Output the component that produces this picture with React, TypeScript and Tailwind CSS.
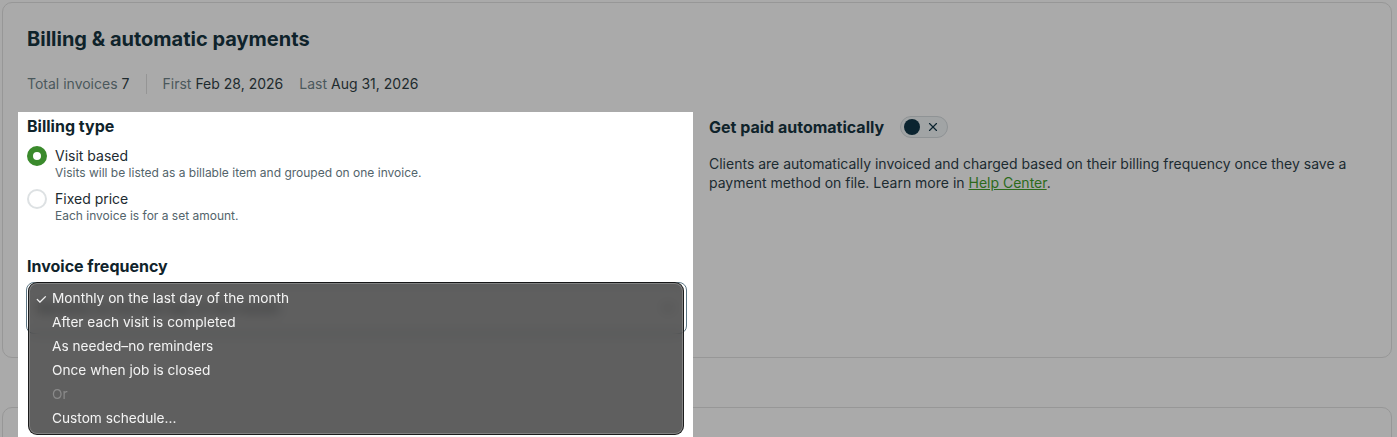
import React from 'react';
import { X, ChevronDown } from 'lucide-react';

const frequencies = [
  { label: 'Monthly on the last day of the month', checked: true },
  { label: 'After each visit is completed' },
  { label: 'As needed–no reminders' },
  { label: 'Once when job is closed' },
  { label: 'Or', disabled: true },
  { label: 'Custom schedule...' },
];

const Radio: React.FC<{ checked?: boolean; label: string; hint: string }> = ({ checked, label, hint }) => (
  <div className="flex items-start gap-2">
    <span
      className={`mt-[-1px] h-5 w-5 shrink-0 rounded-full bg-white ${
        checked ? 'border-[6px] border-[#3a8a2c]' : 'border-2 border-[#dde1e3]'
      }`}
    />
    <div>
      <div className="text-sm leading-[18px] text-[#1c2b31]">{label}</div>
      <div className="text-xs leading-4 text-[#53646b]">{hint}</div>
    </div>
  </div>
);

const App: React.FC = () => {
  return (
    <div className="h-[437px] overflow-hidden bg-[#aaaaaa] pl-[2px] pr-[5px] pt-[2px] font-['Inter',sans-serif]">
      <section className="h-[356px] rounded-[10px] border border-[#979797] px-[15px] pt-[22px]">
        <h2 className="ml-[9px] text-[20px] font-bold leading-7 text-[#0f232b]">Billing &amp; automatic payments</h2>

        <div className="ml-[9px] mt-[21px] flex items-center text-sm leading-5 text-[#1e2a2e]">
          <span className="text-[#4b585c]">Total invoices</span>
          <span className="ml-1">7</span>
          <span className="mx-4 h-5 w-px bg-[#959595]" />
          <span className="text-[#4b585c]">First</span>
          <span className="ml-1">Feb 28, 2026</span>
          <span className="ml-4 text-[#4b585c]">Last</span>
          <span className="ml-1">Aug 31, 2026</span>
        </div>

        <div className="mt-[18px] flex gap-4">
          {/* Highlighted column */}
          <div className="relative z-10 h-[325px] w-[675px] shrink-0 bg-white px-[9px] pt-[2px]">
            <h3 className="text-base font-bold leading-6 text-[#0f232b]">Billing type</h3>
            <div className="mt-[9px] space-y-[9px]">
              <Radio checked label="Visit based" hint="Visits will be listed as a billable item and grouped on one invoice." />
              <Radio label="Fixed price" hint="Each invoice is for a set amount." />
            </div>

            <h3 className="mt-[30px] text-base font-bold leading-6 text-[#0f232b]">Invoice frequency</h3>
            <div className="relative mt-1 -ml-px w-[661px]">
              <div className="flex h-[52px] items-center justify-between rounded-lg border border-[#5c7684] px-[10px] text-sm text-[#1c2b31]">
                <span>Monthly on the last day of the month</span>
                <ChevronDown className="h-4 w-4 text-[#3c4a50]" />
              </div>

              {/* Native-style dropdown */}
              <div className="absolute left-[2px] top-0 w-[656px] rounded-[9px] border border-black/70 bg-[#2a2a2a]/75 pb-[4px] pt-[3px] shadow-[inset_0_0_0_1px_rgba(255,255,255,0.22)] backdrop-blur-[6px]">
                {frequencies.map((f) => (
                  <div
                    key={f.label}
                    className={`flex h-6 items-center pl-[6px] text-[13.7px] ${f.disabled ? 'text-[#8a8a8a]' : 'text-[#f4f4f4]'}`}
                  >
                    <span className="w-[17px] text-[14px]">{f.checked ? '✓' : ''}</span>
                    <span>{f.label}</span>
                  </div>
                ))}
              </div>
            </div>
          </div>

          {/* Right column */}
          <div className="flex-1 pt-[3px]">
            <div className="flex h-6 items-center gap-4">
              <h3 className="text-base font-bold text-[#0f232b]">Get paid automatically</h3>
              <div className="flex h-[22px] w-12 items-center rounded-full border border-[#8f9395] bg-[#a1a4a5] pl-[3px]">
                <span className="h-4 w-4 rounded-full bg-[#0b2430]" />
                <X className="ml-[6px] h-[14px] w-[14px] text-[#0b2430]" strokeWidth={2} />
              </div>
            </div>
            <p className="mt-[15px] text-sm leading-[19px] text-[#1c2b31]">
              Clients are automatically invoiced and charged based on their billing frequency once they save a payment
              method on file. Learn more in <span className="text-[#2d6a1b] underline">Help Center</span>.
            </p>
          </div>
        </div>
      </section>

      <section className="mt-[49px] h-[80px] rounded-[10px] border border-[#979797]" />
    </div>
  );
};

export default App;
